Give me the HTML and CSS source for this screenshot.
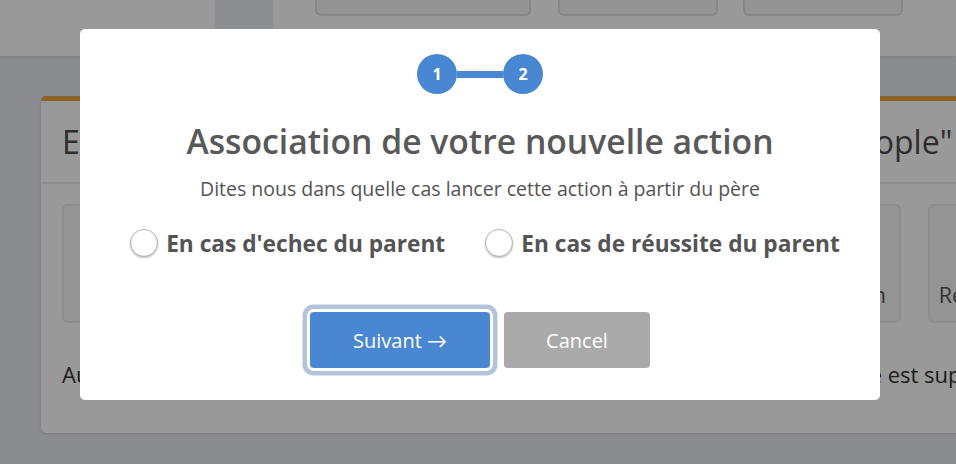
FILE: index.html
```html
<!DOCTYPE html>
<html lang="fr">
<head>
<meta charset="utf-8">
<title>Association de votre nouvelle action</title>
<link rel="stylesheet" href="styles.css">
</head>
<body>
<div class="page">
  <header class="topbar">
    <div class="topbar-strip"></div>
    <div class="tab tab-a"></div>
    <div class="tab tab-b"></div>
    <div class="tab tab-c"></div>
  </header>
  <main class="content">
    <section class="card">
      <h2 class="card-title">Edition des actions liées à l'action mère "Notifier les people"</h2>
      <div class="card-body">
        <div class="tiles">
          <div class="tile"><span>Email</span></div>
          <div class="tile"><span>SMS</span></div>
          <div class="tile"><span>Appel</span></div>
          <div class="tile"><span>Webhook</span></div>
          <div class="tile"><span>Notification</span></div>
          <div class="tile"><span>Redirections</span></div>
        </div>
        <p class="card-text">Aucune action ne sera lancée tant que l'action parente n'est pas notée, ou si elle est supprimée.</p>
      </div>
    </section>
  </main>
</div>

<div class="overlay">
  <div class="modal" role="dialog">
    <div class="steps">
      <div class="step">1</div>
      <div class="step-line"></div>
      <div class="step">2</div>
    </div>
    <h1 class="modal-title">Association de votre nouvelle action</h1>
    <p class="modal-text">Dites nous dans quelle cas lancer cette action à partir du père</p>
    <div class="choices">
      <label class="choice"><input type="radio" name="when" class="radio"><span>En cas d'echec du parent</span></label>
      <label class="choice"><input type="radio" name="when" class="radio"><span>En cas de réussite du parent</span></label>
    </div>
    <div class="actions">
      <button class="btn btn-confirm">Suivant →</button>
      <button class="btn btn-cancel">Cancel</button>
    </div>
  </div>
</div>
</body>
</html>
```
FILE: styles.css
```css
* { box-sizing: border-box; }

html, body {
  margin: 0;
  padding: 0;
  width: 956px;
  height: 464px;
  overflow: hidden;
}

body {
  background: #e8e9ef;
  font-family: "Open Sans", Lato, sans-serif;
  color: #4b4b4b;
}

.page {
  width: 956px;
  height: 464px;
  overflow: hidden;
}

/* ---------- background page ---------- */
.topbar {
  display: flex;
  align-items: flex-start;
  height: 56px;
  background: #ffffff;
  box-shadow: 0 1px 2px rgba(0, 0, 0, 0.08);
}

.topbar-strip {
  margin-left: 215px;
  width: 58px;
  height: 56px;
  background: #ecedf4;
}

.tab {
  height: 16px;
  background: #f5f5f5;
  border: 2px solid #e1e1e1;
  border-top: none;
  border-radius: 0 0 6px 6px;
}
.tab-a { margin-left: 42px; width: 216px; }
.tab-b { margin-left: 27px; width: 160px; }
.tab-c { margin-left: 25px; width: 160px; }

.content {
  padding: 40px 0 0 41px;
}

.card {
  width: 1000px;
  height: 337px;
  background: #ffffff;
  border-top: 5px solid #eea343;
  border-radius: 5px;
  box-shadow: 0 1px 3px rgba(0, 0, 0, 0.12);
}

.card-title {
  margin: 0;
  padding: 20px 21px;
  font-size: 32px;
  font-weight: 400;
  line-height: 41px;
  white-space: nowrap;
  color: #4b4b4b;
  border-bottom: 2px solid #ececec;
}

.card-body {
  padding: 20px 21px;
}

.tiles {
  display: flex;
  gap: 27px;
}

.tile {
  flex: 0 0 146.2px;
  height: 119px;
  border: 2px solid #e9e9e9;
  border-radius: 6px;
  background: #f7f7f7;
  display: flex;
  align-items: flex-end;
  justify-content: center;
  padding-bottom: 12px;
  font-size: 21.5px;
  color: #555;
  white-space: nowrap;
}

.card-text {
  margin: 36px 0 0;
  font-size: 22px;
  line-height: 30px;
  white-space: nowrap;
  color: #333;
}

/* ---------- modal ---------- */
.overlay {
  position: fixed;
  inset: 0;
  background: rgba(0, 0, 0, 0.4);
  padding: 29px 0 0 80px;
}

.modal {
  width: 800px;
  background: #ffffff;
  border-radius: 5px;
  padding: 25px 0 32px;
  display: flex;
  flex-direction: column;
  align-items: center;
  color: #545454;
}

.steps {
  display: flex;
  align-items: center;
  height: 40px;
}

.step {
  width: 40px;
  height: 40px;
  border-radius: 50%;
  background: #4a87d2;
  color: #ffffff;
  font-weight: 700;
  font-size: 16px;
  display: flex;
  align-items: center;
  justify-content: center;
}

.step-line {
  width: 46px;
  height: 7px;
  background: #4a87d2;
}

.modal-title {
  margin: 27px 0 0;
  font-size: 33.7px;
  line-height: 40px;
  font-weight: 600;
  color: #595959;
  white-space: nowrap;
}

.modal-text {
  margin: 15px 0 0;
  font-size: 19.5px;
  line-height: 26px;
  color: #545454;
  white-space: nowrap;
}

.choices {
  margin-top: 27px;
  padding-left: 10px;
  display: flex;
  align-items: center;
  gap: 40px;
  height: 28px;
}

.choice {
  display: flex;
  align-items: center;
  gap: 8px;
  font-size: 22.7px;
  font-weight: 700;
  color: #545454;
  white-space: nowrap;
}

.radio {
  appearance: none;
  -webkit-appearance: none;
  margin: 0;
  width: 28px;
  height: 28px;
  border-radius: 50%;
  border: 1px solid #b5b5b5;
  background: #ffffff;
  box-shadow: 0 1px 2px rgba(0, 0, 0, 0.25), inset 0 -1px 1px rgba(0, 0, 0, 0.06);
}

.actions {
  margin-top: 55px;
  display: flex;
  gap: 14px;
}

.btn {
  height: 56px;
  border: none;
  border-radius: 4px;
  color: #ffffff;
  font-family: "Open Sans", Lato, sans-serif;
  font-size: 20px;
  padding: 0;
}

.btn-confirm {
  width: 180px;
  background: #4a87d2;
  box-shadow: 0 0 0 3px #ffffff, 0 0 0 7.5px #b3c4da;
}

.btn-cancel {
  width: 146px;
  background: #aaaaaa;
}
```
